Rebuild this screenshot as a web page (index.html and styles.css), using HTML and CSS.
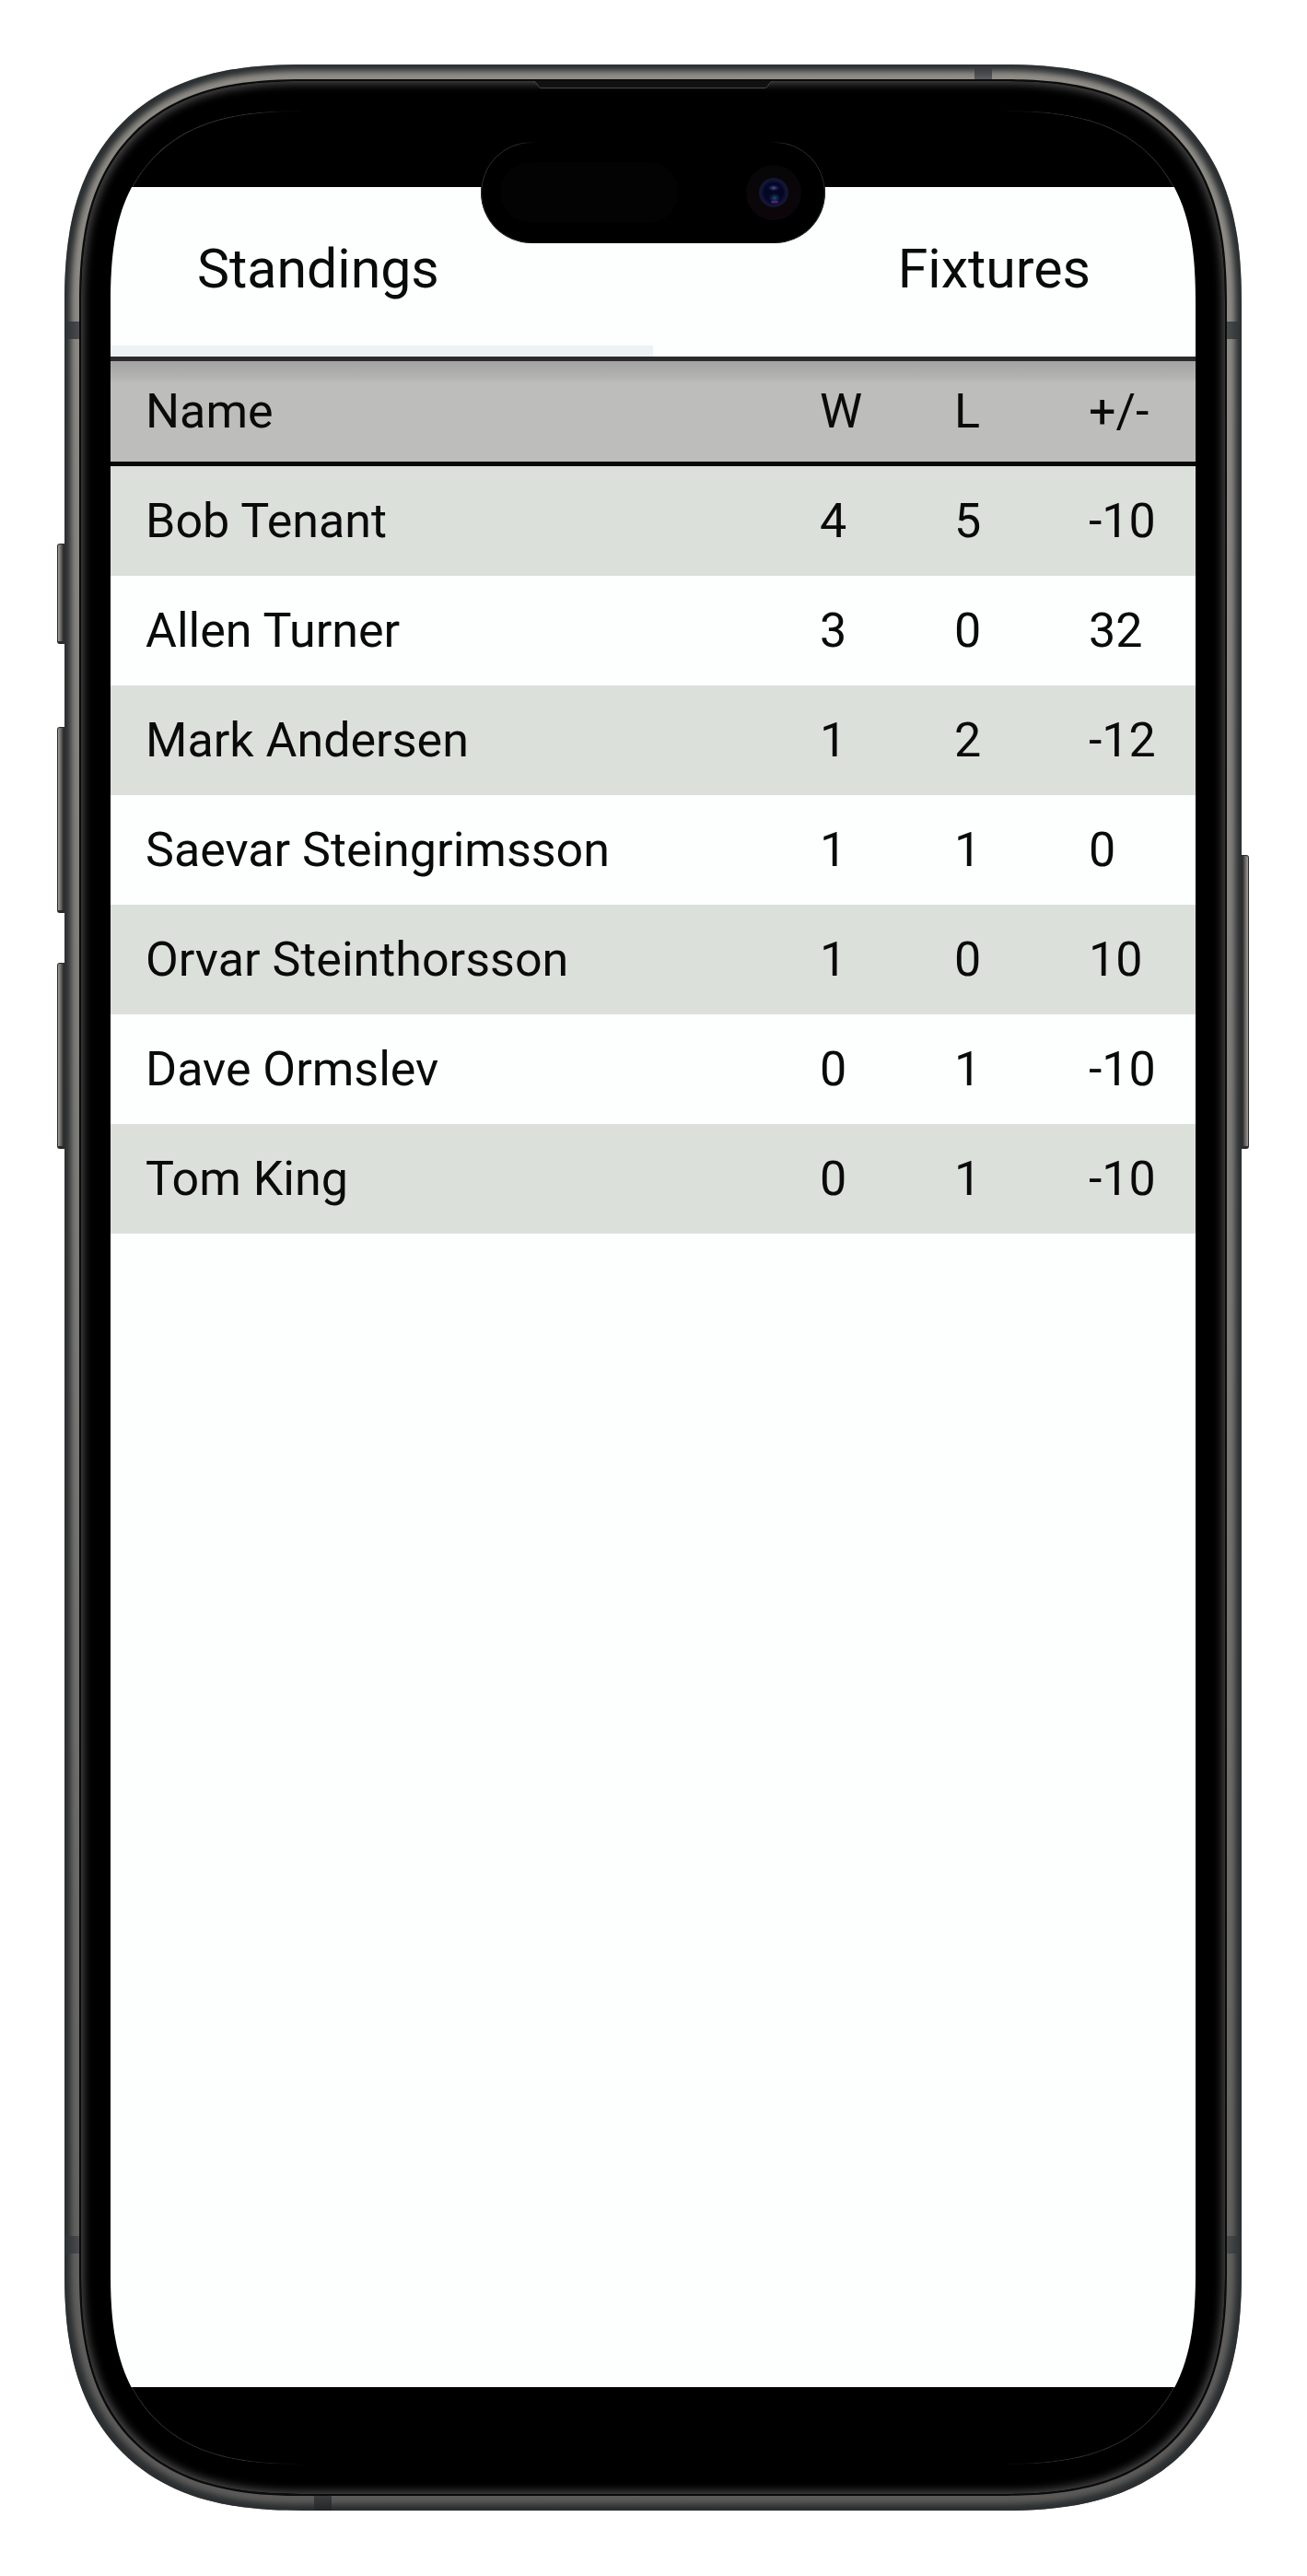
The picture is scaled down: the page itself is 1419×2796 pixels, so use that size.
FILE: index.html
```html
<!DOCTYPE html>
<html lang="en">
<head>
  <meta charset="utf-8">
  <meta name="viewport" content="width=device-width, initial-scale=1">
  <title>Standings</title>
  <link rel="stylesheet" href="styles.css">
</head>
<body>
  <div class="phone">
    <span class="key key-action"></span>
    <span class="key key-up"></span>
    <span class="key key-down"></span>
    <span class="key key-power"></span>
    <div class="rim">
      <span class="band band-left-top"></span>
      <span class="band band-right-top"></span>
      <span class="band band-left-bottom"></span>
      <span class="band band-right-bottom"></span>
      <span class="band band-top"></span>
      <span class="band band-bottom"></span>
      <div class="bezel">
        <svg class="earpiece" viewBox="0 0 260 9" aria-hidden="true">
          <path d="M0 0H260C255 0 256 7.500 251 7.500H9C4 7.500 5 0 0 0Z" fill="#111"/>
          <path d="M0 .5C5 .5 4 7.500 9 7.500H251C256 7.500 255 .5 260 .5" fill="none" stroke="#484848"/>
        </svg>
        <div class="screen">
          <div class="island">
            <span class="sensor"></span>
            <svg class="camera" viewBox="0 0 60 60" aria-hidden="true">
              <defs>
                <linearGradient id="lens-ring" x1="0" y1="0" x2="0" y2="1">
                  <stop offset="0" stop-color="#060607"/>
                  <stop offset="1" stop-color="#0d060c"/>
                </linearGradient>
                <radialGradient id="lens-top">
                  <stop offset="0" stop-color="#5560a0"/>
                  <stop offset="1" stop-color="#101450" stop-opacity="0"/>
                </radialGradient>
                <radialGradient id="lens-bottom">
                  <stop offset="0" stop-color="#175a68"/>
                  <stop offset="1" stop-color="#0a1c50" stop-opacity="0"/>
                </radialGradient>
              </defs>
              <circle cx="30" cy="30" r="30" fill="url(#lens-ring)"/>
              <circle cx="30" cy="30" r="16" fill="#15172b"/>
              <circle cx="30" cy="30" r="12" fill="#05061f" stroke="#0a0d40" stroke-width="2"/>
              <ellipse cx="30" cy="25" rx="7" ry="4" fill="url(#lens-top)"/>
              <ellipse cx="31" cy="36" rx="7" ry="6" fill="url(#lens-bottom)"/>
              <ellipse cx="31" cy="40" rx="4" ry="1.500" fill="#53207a"/>
            </svg>
          </div>
          <main class="app">
            <div class="tabs" role="tablist">
              <button class="tab tab-selected" type="button" role="tab" aria-selected="true">Standings</button>
              <button class="tab tab-end" type="button" role="tab" aria-selected="false">Fixtures</button>
            </div>
            <table class="standings">
              <colgroup>
                <col>
                <col class="col-score">
                <col class="col-score">
                <col class="col-diff">
              </colgroup>
              <thead>
                <tr><th scope="col">Name</th><th scope="col">W</th><th scope="col">L</th><th scope="col">+/-</th></tr>
              </thead>
              <tbody>
                <tr><td>Bob Tenant</td><td>4</td><td>5</td><td>-10</td></tr>
                <tr><td>Allen Turner</td><td>3</td><td>0</td><td>32</td></tr>
                <tr><td>Mark Andersen</td><td>1</td><td>2</td><td>-12</td></tr>
                <tr><td>Saevar Steingrimsson</td><td>1</td><td>1</td><td>0</td></tr>
                <tr><td>Orvar Steinthorsson</td><td>1</td><td>0</td><td>10</td></tr>
                <tr><td>Dave Ormslev</td><td>0</td><td>1</td><td>-10</td></tr>
                <tr><td>Tom King</td><td>0</td><td>1</td><td>-10</td></tr>
              </tbody>
            </table>
          </main>
        </div>
      </div>
    </div>
  </div>
</body>
</html>
```
FILE: styles.css
```css
* {
  box-sizing: border-box;
}

body {
  margin: 0;
  padding: 70px 71px 71px 70px;
  min-height: 100vh;
  display: flex;
  background: #fff;
  color: #0a0a0a;
  font-family: Roboto, "Liberation Sans", sans-serif;
}

/* Device body */
.phone {
  position: relative;
  flex: 1;
  display: flex;
}

.rim {
  position: relative;
  flex: 1;
  display: flex;
  padding: 16px;
  border-radius: 218px;
  background: linear-gradient(#918e88, #7c7a76 50%, #5c5b59);
  box-shadow: inset 0 0 6px 7px #2b2f31;
}

.bezel {
  position: relative;
  flex: 1;
  display: flex;
  padding: 32px;
  border: 2px solid #0b0b0b;
  border-radius: 202px;
  background: #000;
  box-shadow: inset 0 0 10px 3px #484848;
}

.screen {
  position: relative;
  flex: 1;
  display: flex;
  flex-direction: column;
  padding: 83px 0 84px;
  border-radius: 168px;
  overflow: hidden;
  background: #000;
}

/* Faint glass edge, visible only round the dark corners */
.screen::before {
  content: "";
  position: absolute;
  inset: 0;
  border: 1px solid #303030;
  border-radius: inherit;
  mask-image: linear-gradient(90deg, #000 150px, transparent 210px, transparent calc(100% - 210px), #000 calc(100% - 150px));
}

@supports (corner-shape: superellipse(1.4)) {
  .rim {
    border-radius: 260px;
    corner-shape: superellipse(1.32);
  }

  .bezel {
    border-radius: 244px;
    corner-shape: superellipse(1.34);
  }

  .screen,
  .screen::before {
    border-radius: 210px;
    corner-shape: superellipse(1.4);
  }
}

/* Side keys */
.key {
  position: absolute;
  left: -8px;
  width: 8px;
  border: 1px solid #2c2b29;
  border-bottom-width: 3px;
  border-radius: 3px 0 0 3px;
  background: linear-gradient(90deg, #a19f9c, #6a6864 50%, #2d2c2a);
}

.key-action {
  top: 520px;
  height: 109px;
}

.key-up {
  top: 719px;
  height: 202px;
}

.key-down {
  top: 975px;
  height: 202px;
}

.key-power {
  top: 858px;
  left: auto;
  right: -8px;
  height: 319px;
  border-radius: 0 3px 3px 0;
  background: linear-gradient(270deg, #a19f9c, #6a6864 50%, #2d2c2a);
}

/* Antenna bands */
.band {
  position: absolute;
  width: 16px;
  height: 19px;
  background: linear-gradient(90deg, #2c3032, #4a4c4e);
}

.band-left-top {
  top: 279px;
  left: 0;
}

.band-right-top {
  top: 279px;
  right: 0;
  background: linear-gradient(270deg, #2c3032, #4a4c4e);
}

.band-left-bottom {
  bottom: 279px;
  left: 0;
}

.band-right-bottom {
  bottom: 279px;
  right: 0;
  background: linear-gradient(270deg, #2c3032, #4a4c4e);
}

.band-top {
  top: 0;
  right: 271px;
  width: 19px;
  height: 16px;
  background: linear-gradient(#2c3032, #5a5c5e);
}

.band-bottom {
  bottom: 0;
  left: 271px;
  width: 19px;
  height: 16px;
  background: linear-gradient(#3a3c3e, #232627);
}

.earpiece {
  position: absolute;
  top: 0;
  left: 50%;
  width: 260px;
  height: 9px;
  transform: translateX(-50%);
}

/* Camera cut-out */
.island {
  position: absolute;
  z-index: 1;
  top: 34px;
  left: 50%;
  transform: translateX(-50%);
  display: flex;
  align-items: center;
  justify-content: space-between;
  width: 374px;
  height: 110px;
  padding: 0 26px 0 21px;
  border-radius: 55px;
  background: #000;
}

.island::before {
  content: "";
  position: absolute;
  inset: 0;
  border: 1px solid #303030;
  border-radius: inherit;
  mask-image: linear-gradient(90deg, #000 40px, transparent 60px, transparent calc(100% - 60px), #000 calc(100% - 40px));
}

.sensor {
  width: 194px;
  height: 66px;
  border-radius: 33px;
  background: #030303;
}

.camera {
  width: 60px;
  height: 60px;
}

/* App */
.app {
  position: relative;
  flex: 1;
  background: #fdfefe;
}

.tabs {
  display: grid;
  grid-template-columns: 1fr 1fr;
}

.tab {
  height: 184px;
  padding: 4px 94px 0;
  border: 0;
  border-bottom: 12px solid transparent;
  background: none;
  color: inherit;
  font: inherit;
  font-size: 59px;
  text-align: left;
}

.tab-selected {
  border-bottom-color: #edf3f5;
}

.tab-end {
  padding: 4px 114px 0;
  text-align: right;
}

.standings {
  width: 100%;
  table-layout: fixed;
  border-collapse: separate;
  border-spacing: 0;
  font-size: 52px;
  line-height: 64px;
}

.col-score {
  width: 146px;
}

.col-diff {
  width: 154px;
}

.standings th,
.standings td {
  height: 119px;
  padding: 0 0 0 38px;
  font-weight: 400;
  text-align: left;
  white-space: nowrap;
}

.standings th {
  border-top: 5px solid #2b2b2b;
  border-bottom: 5px solid #080808;
  background: linear-gradient(#a3a3a3, #b3b3b2 18px, #bdbdbb 24px);
}

.standings tbody tr:nth-child(odd) {
  background: #dce0da;
}
```
